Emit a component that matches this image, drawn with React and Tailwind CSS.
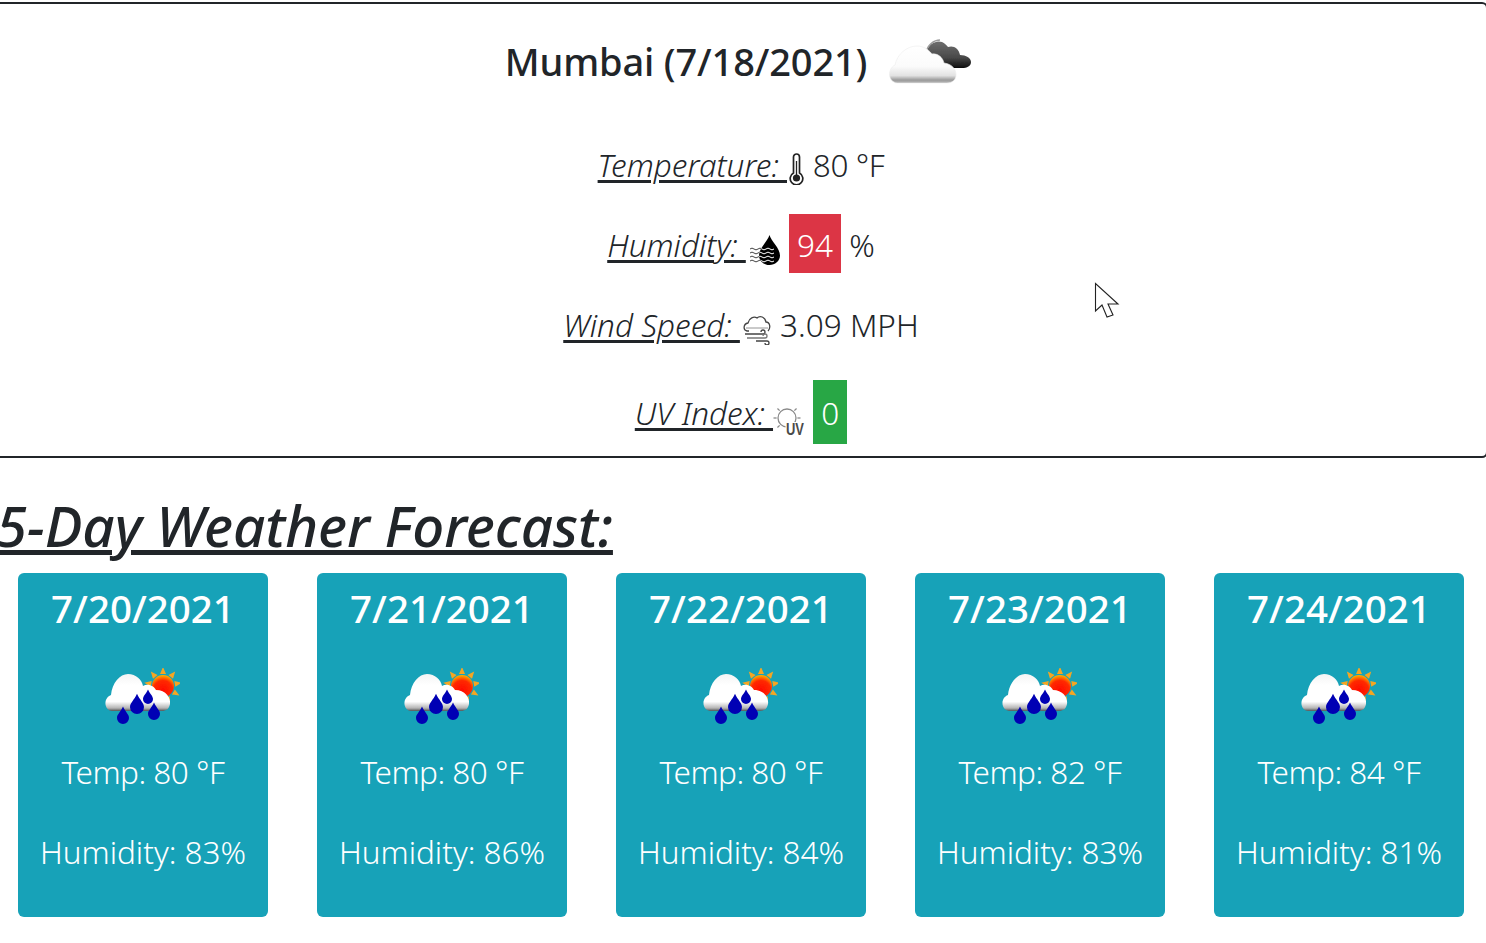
const FONT = "font-['Noto_Sans','Open_Sans',sans-serif]";

function CloudIcon() {
  return (
    <svg width="84" height="48" viewBox="0 0 84 48" className="shrink-0">
      <defs>
        <linearGradient id="w" x1="0" y1="0" x2="0" y2="1">
          <stop offset="0" stopColor="#ffffff" />
          <stop offset="0.55" stopColor="#fbfbfb" />
          <stop offset="0.8" stopColor="#e2e2e2" />
          <stop offset="0.92" stopColor="#9a9a9a" />
          <stop offset="1" stopColor="#b8b8b8" />
        </linearGradient>
        <linearGradient id="d" x1="0" y1="0" x2="0" y2="1">
          <stop offset="0" stopColor="#6e6e6e" />
          <stop offset="0.6" stopColor="#4a4a4a" />
          <stop offset="1" stopColor="#0c0c0c" />
        </linearGradient>
        <filter id="b1"><feGaussianBlur stdDeviation="0.6" /></filter>
      </defs>
      <g filter="url(#b1)">
        <path d="M38 15C41 6 49 3 54 5C58 7 59 9 60 10C65 8 71 11 72 18C78 18 83 21 83 25C83 29 79 31 74 31H56C51 28 48 22 45 20C43 18 40 16 38 15Z" fill="url(#d)" />
        <path d="M38 16C39 8 46 3 52 3" fill="none" stroke="#9c9c9c" strokeWidth="1.5" />
        <path d="M9 46C0 45 -1 32 7 28C9 17 19 9 29 9C35 9 40 12 44 17C50 16 55 21 56 26C64 27 68 32 68 38C68 43 64 46 59 46Z" fill="url(#w)" stroke="#ececec" strokeWidth="0.6" />
      </g>
    </svg>
  );
}

function RainIcon({ id }) {
  const drop = (x, y, r) => `M${x} ${y - r * 1.9}C${x + r * 0.4} ${y - r} ${x + r} ${y - r * 0.6} ${x + r} ${y}A${r} ${r} 0 0 1 ${x - r} ${y}C${x - r} ${y - r * 0.6} ${x - r * 0.4} ${y - r} ${x} ${y - r * 1.9}Z`;
  const rays = [0, 40, 80, 120, 160, 200, 240, 280, 320];
  return (
    <svg width="76" height="58" viewBox="0 0 76 58">
      <defs>
        <linearGradient id={`c${id}`} x1="0" y1="0" x2="0" y2="1">
          <stop offset="0" stopColor="#f4f4f4" />
          <stop offset="0.3" stopColor="#ffffff" />
          <stop offset="0.75" stopColor="#ffffff" />
          <stop offset="0.92" stopColor="#b5b5b5" />
          <stop offset="1" stopColor="#555555" />
        </linearGradient>
        <radialGradient id={`s${id}`} cx="0.5" cy="0.7" r="0.75">
          <stop offset="0" stopColor="#ff0a00" />
          <stop offset="0.6" stopColor="#ff2a00" />
          <stop offset="1" stopColor="#ffd000" />
        </radialGradient>
        <filter id={`f${id}`}><feGaussianBlur stdDeviation="0.6" /></filter>
      </defs>
      <g filter={`url(#f${id})`}>
        {rays.map((a) => (
          <polygon key={a} points="56,6 59,-1 62,6" fill="#f5a623" transform={`rotate(${a} 59 18)`} />
        ))}
        <circle cx="59" cy="18" r="11" fill={`url(#s${id})`} />
        <path d="M8 43C0 42 -1 30 7 27C8 15 16 6 24 6C32 6 38 12 39 18C44 15 50 18 52 22C62 22 67 30 66 36C65 41 62 43 58 43Z" fill={`url(#c${id})`} />
        <path d={drop(19, 50, 6)} fill="#0000b4" />
        <path d={drop(33, 39, 7)} fill="#0000b4" />
        <path d={drop(44, 31, 5)} fill="#0000b4" />
        <path d={drop(50, 46, 6)} fill="#0000b4" />
      </g>
    </svg>
  );
}

function Thermo() {
  return (
    <svg width="18" height="32" viewBox="-1.5 0 18 32" className="inline-block align-[-8px]" fill="none" stroke="#222">
      <path d="M5 20V4a3 3 0 0 1 6 0V20a6.3 6.3 0 1 1-6 0Z" strokeWidth="1.7" fill="#fff" />
      <circle cx="8" cy="25" r="3.6" fill="#222" stroke="none" />
      <path d="M8 8V24" strokeWidth="1.3" />
    </svg>
  );
}

function HumidIcon() {
  const dropPath = "M20.5 1C19 7 10 14 10 21.5C10 27 15 31 20.5 31C26 31 31 27 31 21.5C31 14 22 7 20.5 1Z";
  const waves = [15, 19, 23, 27].map((y) => `M1 ${y}q2-1.8 4 0t4 0t4 0t4 0t4 0t4 0`);
  return (
    <svg width="35" height="32" viewBox="-3 0 35 32" className="inline-block align-[-9px]">
      <defs>
        <clipPath id="dropclip"><path d={dropPath} /></clipPath>
      </defs>
      <g fill="none" stroke="#444" strokeWidth="1">
        {waves.map((d) => <path key={d} d={d} />)}
      </g>
      <path d={dropPath} fill="#000" />
      <g fill="none" stroke="#fff" strokeWidth="1" clipPath="url(#dropclip)">
        {waves.map((d) => <path key={d} d={d} />)}
      </g>
    </svg>
  );
}

function WindIcon() {
  return (
    <svg width="32" height="30" viewBox="-3 0 32 30" className="inline-block align-[-8px]" fill="none" stroke="#444" strokeWidth="1.3">
      <path d="M6 16H4C0 15 0 9 5 8C6 3 11 1 14 3C17 0 22 2 23 7C27 7 28 13 25 16" />
      <path d="M3 13H25" stroke="#888" strokeWidth="0.9" />
      <path d="M2 19H20a2 2 0 1 0-2-2" />
      <path d="M4 23H22a2 2 0 1 0-2-2" stroke="#777" />
      <path d="M13 26H24a2 2 0 1 1-2 2" />
    </svg>
  );
}

function UvIcon() {
  const rays = [-90, -45, 45, 90, -135, 180, 135];
  return (
    <svg width="32" height="30" viewBox="-2 0 32 30" className="inline-block align-[-10px]">
      <g stroke="#8a8a8a" strokeWidth="1.3" fill="none">
        <circle cx="12" cy="13" r="9" />
        {rays.map((a) => (
          <path key={a} d="M12 -0.5V2.6" transform={`rotate(${a} 12 13)`} />
        ))}
      </g>
      <rect x="10.5" y="17" width="20" height="13" fill="#fff" />
      <text x="20" y="29.5" textAnchor="middle" fontSize="16" fontWeight="700" fontFamily="Liberation Sans, sans-serif" fill="#4a4a4a" textLength="18" lengthAdjust="spacingAndGlyphs">UV</text>
    </svg>
  );
}

const days = [
  ["7/20/2021", 80, 83],
  ["7/21/2021", 80, 86],
  ["7/22/2021", 80, 84],
  ["7/23/2021", 82, 83],
  ["7/24/2021", 84, 81],
];

const rowText = "text-[31.5px] font-light whitespace-pre";
const label = "italic underline decoration-[3px] underline-offset-[3px]";

export default function App() {
  return (
    <div className={`relative w-[1486px] h-[943px] overflow-hidden bg-white text-[#212529] ${FONT}`}>
      <div className="ml-[-6px] mt-[2px] w-[1494px] h-[456px] border-2 border-[#212529] rounded-[6px] text-center">
        <div className="flex justify-center items-center h-[118px] pr-[5px] pb-[4px]">
          <h2 className="text-[38px] font-medium leading-[44px] tracking-[-0.15px]">Mumbai (7/18/2021)</h2>
          <span className="ml-[21px] flex"><CloudIcon /></span>
        </div>
        <p className={`${rowText} leading-[60px] h-[60px] mt-[13px]`}>
          <span className={label}>Temperature: </span><Thermo /><span className="tracking-[-0.4px]"> 80 °F</span>
        </p>
        <p className={`${rowText} leading-[56px] h-[61px] mt-[19px]`}>
          <span className={label}>Humidity: </span><HumidIcon /> <span className="inline-block bg-[#dc3545] text-white px-[8px] h-[59px] leading-[61px]">94</span> %
        </p>
        <p className={`${rowText} leading-[60px] h-[60px] mt-[20px]`}>
          <span className={label}>Wind Speed: </span><WindIcon /> 3.09 MPH
        </p>
        <p className={`${rowText} leading-[66px] h-[64px] mt-[25px]`}>
          <span className={label}>UV Index: </span><UvIcon /> <span className="inline-block bg-[#28a745] text-white px-[8px] h-[64px] leading-[66px]">0</span>
        </p>
      </div>
      <h3 className="ml-[-4px] mt-[31px] h-[84px] text-[56.2px] font-medium italic leading-[72px] underline decoration-[5px] underline-offset-[3px] whitespace-pre">5-Day Weather Forecast:</h3>
      <div className="flex gap-[49px] pl-[18px]">
        {days.map(([d, t, h], i) => (
          <div key={d} className="w-[250px] h-[344px] bg-[#17a2b8] rounded-[6px] text-white flex flex-col items-center">
            <div className="mt-[9px] text-[38.5px] leading-[52px] font-medium">{d}</div>
            <div className="mt-[34px] mr-[2px] flex h-[58px]"><RainIcon id={i} /></div>
            <div className="mt-[22px] text-[31.5px] font-light leading-[48px] tracking-[-0.5px]">Temp: {t} °F</div>
            <div className="mt-[32px] text-[31.5px] font-light leading-[48px]">Humidity: {h}%</div>
          </div>
        ))}
      </div>
      <svg width="26" height="40" viewBox="0 0 26 40" className="absolute left-[1094px] top-[282px]">
        <path d="M1.5 1.5V29L8 23L13 35L19 33L14 22H24Z" fill="#fff" stroke="#222" strokeWidth="1.1" />
      </svg>
    </div>
  );
}
